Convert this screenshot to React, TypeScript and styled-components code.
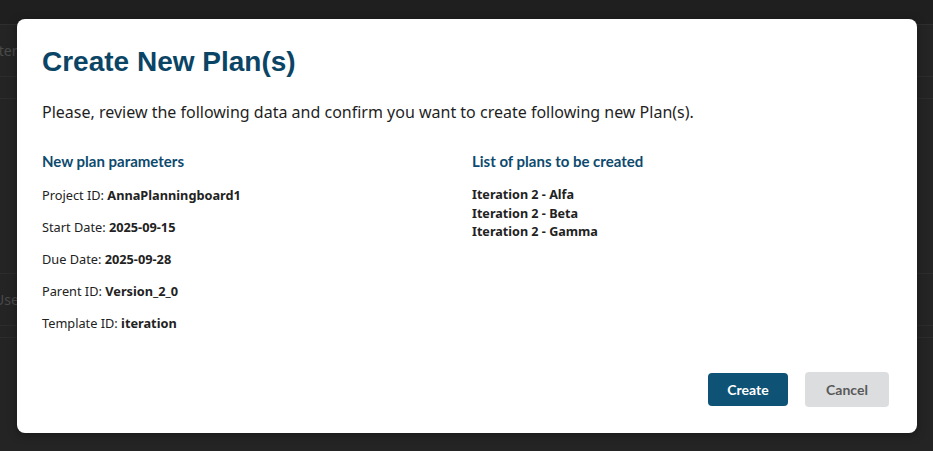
import styled, { createGlobalStyle } from 'styled-components'

const GlobalStyle = createGlobalStyle`
    html, body {
        margin: 0;
        padding: 0;
        background: #232323;
    }
    * {
        box-sizing: border-box;
    }
`

const Page = styled.div`
    position: relative;
    width: 933px;
    height: 451px;
    overflow: hidden;
    background: #242424;
    font-family: 'Noto Sans', 'Liberation Sans', sans-serif;
`

const TopBar = styled.div`
    height: 25px;
    background: #1f1f1f;
    border-bottom: 1px solid #2e2e2e;
`

const BgRow = styled.div<{ $h: number }>`
    height: ${(p) => p.$h}px;
    border-bottom: 1px solid #2c2c2c;
    display: flex;
    align-items: center;
    color: #4a4a4a;
    font-size: 14px;
    overflow: hidden;
    white-space: nowrap;
    text-indent: -6px;
`

const Modal = styled.div`
    position: absolute;
    top: 19px;
    left: 17px;
    width: 900px;
    height: 414px;
    background: #ffffff;
    border-radius: 8px;
    padding: 27px 28px 26px 25px;
    display: flex;
    flex-direction: column;
    box-shadow: 0 2px 10px rgba(0, 0, 0, 0.35);
`

const Title = styled.h1`
    margin: 0;
    font-family: 'Liberation Sans', Arial, sans-serif;
    font-size: 28px;
    line-height: 32px;
    font-weight: 700;
    color: #0b4566;
`

const Intro = styled.p`
    margin: 22px 0 0;
    font-size: 16px;
    line-height: 24px;
    color: #1f1f1f;
`

const Columns = styled.div`
    display: grid;
    grid-template-columns: 430px 1fr;
    margin-top: 27px;
`

const Column = styled.div`
    display: flex;
    flex-direction: column;
`

const SectionTitle = styled.h2`
    margin: 0 0 14px;
    font-family: Lato, 'Liberation Sans', sans-serif;
    font-size: 15px;
    line-height: 20px;
    font-weight: 700;
    color: #0d4a6e;
`

const ParamList = styled.div`
    display: flex;
    flex-direction: column;
    gap: 12px;
`

const Param = styled.div`
    font-size: 12.75px;
    line-height: 20px;
    color: #222;

    b {
        font-weight: 700;
    }
`

const PlanList = styled.div`
    display: flex;
    flex-direction: column;
    padding-top: 1px;
`

const PlanItem = styled.div`
    font-size: 12.6px;
    line-height: 18.5px;
    font-weight: 700;
    color: #222;
`

const Footer = styled.div`
    margin-top: auto;
    display: flex;
    justify-content: flex-end;
    align-items: center;
    gap: 17px;
`

const Button = styled.button<{ $variant: 'primary' | 'secondary' }>`
    border: none;
    border-radius: 4px;
    font-family: Lato, 'Liberation Sans', sans-serif;
    font-size: 14px;
    font-weight: 700;
    cursor: pointer;
    width: ${(p) => (p.$variant === 'primary' ? '80px' : '84px')};
    height: ${(p) => (p.$variant === 'primary' ? '33px' : '35px')};
    background: ${(p) => (p.$variant === 'primary' ? '#0e5275' : '#dcdddf')};
    color: ${(p) => (p.$variant === 'primary' ? '#ffffff' : '#595959')};
`

const params = [
    { label: 'Project ID', value: 'AnnaPlanningboard1' },
    { label: 'Start Date', value: '2025-09-15' },
    { label: 'Due Date', value: '2025-09-28' },
    { label: 'Parent ID', value: 'Version_2_0' },
    { label: 'Template ID', value: 'iteration' },
]

const plans = ['Iteration 2 - Alfa', 'Iteration 2 - Beta', 'Iteration 2 - Gamma']

export default function App() {
    return (
        <>
            <GlobalStyle />
            <Page>
                <TopBar />
                <BgRow $h={52}>Iteration</BgRow>
                <BgRow $h={22} />
                <BgRow $h={175} />
                <BgRow $h={52}>Users</BgRow>
                <BgRow $h={12} />
                <Modal>
                    <Title>Create New Plan(s)</Title>
                    <Intro>
                        Please, review the following data and confirm you want to create
                        following new Plan(s).
                    </Intro>
                    <Columns>
                        <Column>
                            <SectionTitle>New plan parameters</SectionTitle>
                            <ParamList>
                                {params.map((p) => (
                                    <Param key={p.label}>
                                        {p.label}: <b>{p.value}</b>
                                    </Param>
                                ))}
                            </ParamList>
                        </Column>
                        <Column>
                            <SectionTitle>List of plans to be created</SectionTitle>
                            <PlanList>
                                {plans.map((name) => (
                                    <PlanItem key={name}>{name}</PlanItem>
                                ))}
                            </PlanList>
                        </Column>
                    </Columns>
                    <Footer>
                        <Button $variant="primary">Create</Button>
                        <Button $variant="secondary">Cancel</Button>
                    </Footer>
                </Modal>
            </Page>
        </>
    )
}
